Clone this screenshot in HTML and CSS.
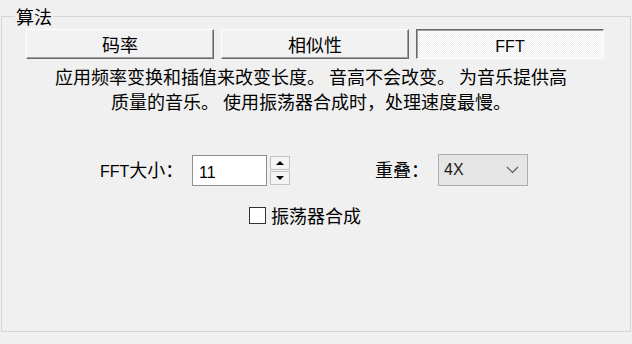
FILE: index.html
```html
<!DOCTYPE html>
<html lang="zh-CN">
<head>
    <meta charset="UTF-8">
    <title>算法</title>
    <link rel="stylesheet" href="styles.css">
</head>
<body>
    <fieldset class="group">
        <legend class="group-title">算法</legend>

        <!-- algorithm tabs -->
        <div class="mode-row">
            <button class="mode-btn">码率</button>
            <button class="mode-btn">相似性</button>
            <button class="mode-btn pressed"><span class="latin">FFT</span></button>
        </div>

        <p class="desc">应用频率变换和插值来改变长度。 音高不会改变。 为音乐提供高<br>质量的音乐。 使用振荡器合成时，处理速度最慢。</p>

        <div class="ctrl-row">
            <label class="lbl lbl-size"><span class="latin">FFT</span>大小：</label>
            <div class="edit"><span class="latin">11</span></div>
            <div class="spin">
                <div class="spin-btn"><span class="arrow up"></span></div>
                <div class="spin-btn"><span class="arrow down"></span></div>
            </div>
            <label class="lbl lbl-overlap">重叠：</label>
            <div class="combo">
                <span class="latin combo-text">4X</span>
                <svg class="chevron" width="13" height="8" viewBox="0 0 13 8">
                    <polyline points="1,1 6.5,6.5 12,1" fill="none" stroke="#5a5a5a" stroke-width="1.2"/>
                </svg>
            </div>
        </div>

        <div class="check-row">
            <span class="checkbox"></span>
            <span class="check-text">振荡器合成</span>
        </div>
    </fieldset>
</body>
</html>
```

FILE: styles.css
```css
body {
    margin: 0;
    padding: 0;
    width: 632px;
    height: 344px;
    overflow: hidden;
    background-color: #f0f0f0;
    font-family: "Noto Sans CJK SC", sans-serif;
    font-size: 18px;
    color: #000;
}

.latin {
    font-family: "Liberation Sans", "Noto Sans CJK SC", sans-serif;
    font-size: 16px;
}

/* group box */
.group {
    margin: 5px 1px 0 1px;
    padding: 0;
    height: 327px;
    box-sizing: border-box;
    border: 1px solid #d5d5d5;
}

.group-title {
    margin-left: 13px;
    padding: 0 1px;
    line-height: 22px;
}

/* tab-like buttons */
.mode-row {
    display: flex;
    gap: 7px;
    margin: 2px 0 0 24px;
}

.mode-btn {
    width: 188px;
    height: 30px;
    padding: 0;
    font-family: inherit;
    font-size: inherit;
    line-height: 28px;
    color: #000;
    background-color: #f2f2f2;
    border: 1px solid;
    border-color: #ffffff #696969 #696969 #ffffff;
    box-shadow: inset -1px -1px #a0a0a0;
}

.mode-btn.pressed {
    border-color: #696969 #ffffff #ffffff #696969;
    box-shadow: inset 1px 1px #a0a0a0;
    background: repeating-conic-gradient(#ffffff 0 25%, #efefef 0 50%) 0 0 / 2px 2px;
}

.desc {
    margin: 5px 0 0 0;
    padding-right: 10px;
    text-align: center;
    line-height: 25px;
}

/* FFT size / overlap row */
.ctrl-row {
    display: flex;
    align-items: flex-start;
    margin-top: 40px;
    height: 32px;
}

.lbl {
    line-height: 30px;
}

.lbl-size {
    margin-left: 98px;
    width: 92px;
}

.edit {
    width: 75px;
    height: 31px;
    margin-top: 1px;
    box-sizing: border-box;
    border: 1px solid #8f8f8f;
    background-color: #fff;
    padding-left: 6px;
    line-height: 29px;
}

.spin {
    display: flex;
    flex-direction: column;
    gap: 1px;
    margin: 2px 0 0 3px;
}

.spin-btn {
    width: 20px;
    height: 14px;
    box-sizing: border-box;
    border: 1px solid #c4c4c4;
    background-color: #f4f4f4;
    display: flex;
    align-items: center;
    justify-content: center;
}

.arrow {
    width: 0;
    height: 0;
    border-left: 4px solid transparent;
    border-right: 4px solid transparent;
}

.arrow.up {
    border-bottom: 4px solid #000;
}

.arrow.down {
    border-top: 4px solid #000;
}

.lbl-overlap {
    margin-left: 85px;
    width: 63px;
}

.combo {
    width: 90px;
    height: 32px;
    box-sizing: border-box;
    border: 1px solid #adadad;
    background-color: #e5e5e5;
    display: flex;
    align-items: center;
    justify-content: space-between;
    padding: 0 8px 0 5px;
}

.combo-text {
    color: #1a1a1a;
}

/* checkbox row */
.check-row {
    display: flex;
    align-items: center;
    margin: 18px 0 0 247px;
    line-height: 22px;
}

.checkbox {
    width: 17px;
    height: 17px;
    box-sizing: border-box;
    border: 1px solid #333;
    background-color: #fff;
}

.check-text {
    margin-left: 5px;
}
```
